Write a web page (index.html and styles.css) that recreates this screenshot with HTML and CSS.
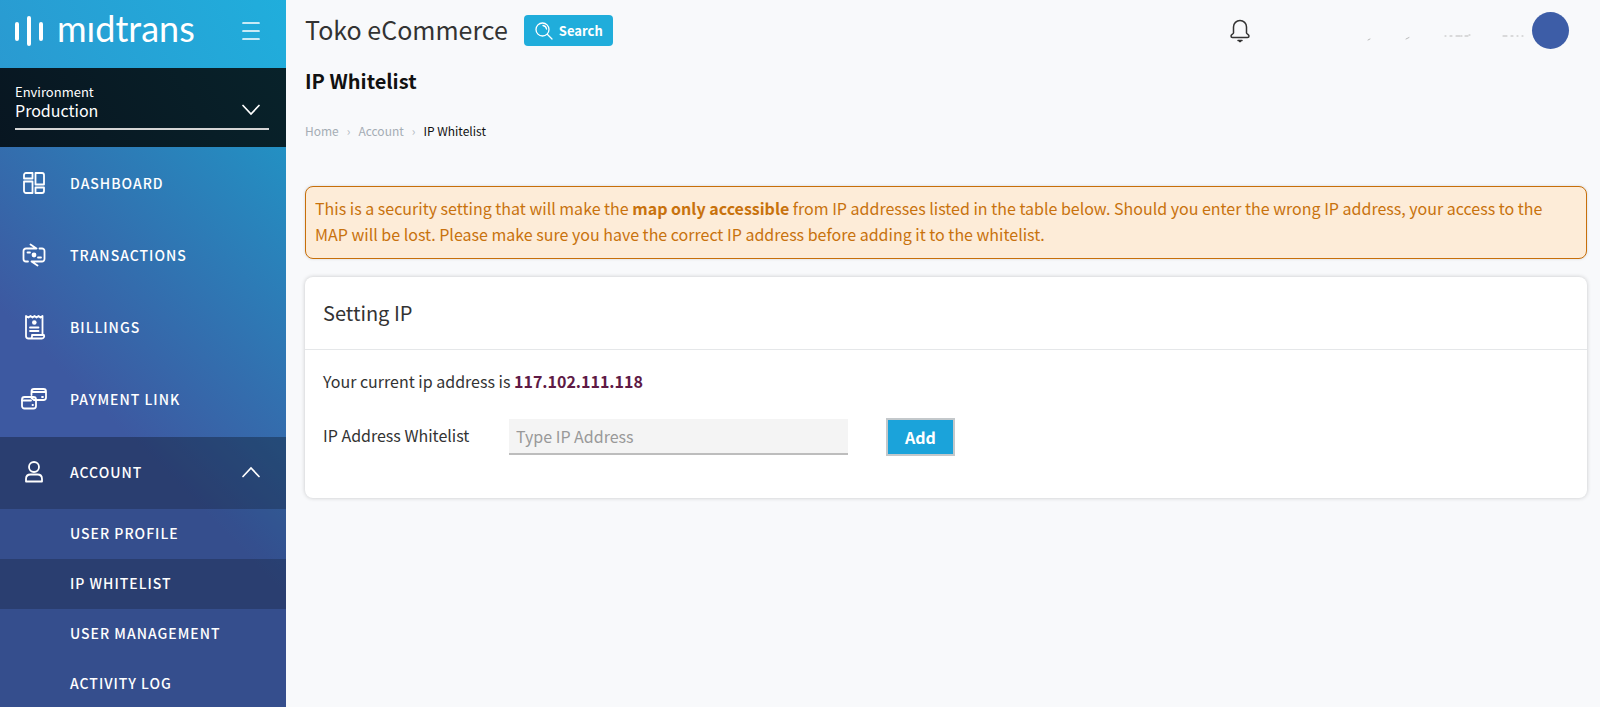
FILE: index.html
```html
<!DOCTYPE html>
<html lang="en">
<head>
<meta charset="utf-8">
<meta name="viewport" content="width=device-width, initial-scale=1">
<title>IP Whitelist</title>
<link rel="stylesheet" href="styles.css">
</head>
<body>
<div class="app">
  <aside class="sidebar">
    <div class="brand">
      <a class="brand-link" href="#" aria-label="midtrans">
        <svg class="brand-mark" width="28" height="30" viewBox="0 0 28 30" fill="none" stroke="#fff" stroke-width="4" stroke-linecap="round"><path d="M2 8v15M14 2v26M26 8v15"/></svg>
        <span class="brand-name">mıdtrans</span>
      </a>
      <button class="icon-button" type="button" aria-label="Toggle menu">
        <svg width="18" height="20" viewBox="0 0 18 20" fill="none" stroke="#fff" stroke-width="1.700" stroke-linecap="round"><path d="M1 2h16M1 10h16M1 18h16"/></svg>
      </button>
    </div>
    <div class="environment">
      <div class="environment-field">
        <label class="environment-label" for="environment">Environment</label>
        <select class="environment-select" id="environment"><option>Production</option><option>Sandbox</option></select>
        <svg class="environment-chevron" width="18" height="12" viewBox="0 0 18 12" fill="none" stroke="#fff" stroke-width="1.700" stroke-linecap="round"><path d="M1 1.500l8 8.500 8-8.500"/></svg>
      </div>
    </div>
    <nav>
      <ul class="menu">
        <li><a class="menu-item" href="#">
          <svg class="menu-icon" viewBox="0 0 26 26" fill="none" stroke="#fff" stroke-width="1.800" stroke-linejoin="round"><path d="M5 3h6.500v5.500H3V5a2 2 0 0 1 2-2zM14.500 3H21a2 2 0 0 1 2 2v9.500h-8.500zM3 11.500h8.500V23H5a2 2 0 0 1-2-2zM14.500 17.500H23V21a2 2 0 0 1-2 2h-6.500z"/></svg>Dashboard</a></li>
        <li><a class="menu-item" href="#">
          <svg class="menu-icon" viewBox="0 0 26 26" fill="none" stroke="#fff" stroke-width="1.800" stroke-linecap="round" stroke-linejoin="round"><path d="M9.500 2.500l6 4H5a2.500 2.500 0 0 0-2.500 2.500v8A2.500 2.500 0 0 0 5 19.500h2M18.500 6.500H21a2.500 2.500 0 0 1 2.500 2.500v8a2.500 2.500 0 0 1-2.500 2.500H10.500l6 4M6.500 10.500h2.500M17 15.500h3"/><circle cx="13" cy="13" r="2.400" fill="#fff" stroke="none"/></svg>Transactions</a></li>
        <li><a class="menu-item" href="#">
          <svg class="menu-icon" viewBox="0 0 26 26" fill="none" stroke="#fff" stroke-width="1.800" stroke-linecap="round" stroke-linejoin="round"><path d="M21.500 20V2l-2 1.500-2-1.500-2 1.500-2-1.500-2 1.500-2-1.500-2 1.500L5 2v20a2.500 2.500 0 0 0 2.500 2.500h13A2.500 2.500 0 0 0 23 21H11v1.500a2 2 0 0 1-2.500 2M9 13.500h8.500M9 17h8.500"/><circle cx="13.300" cy="8.500" r="2.300" fill="#fff" stroke="none"/></svg>Billings</a></li>
        <li><a class="menu-item" href="#">
          <svg class="menu-icon" viewBox="0 0 26 26" fill="none" stroke="#fff" stroke-width="1.800" stroke-linecap="round" stroke-linejoin="round"><path d="M10.500 9V5.500a2.500 2.500 0 0 1 2.500-2.500h9.500A2.500 2.500 0 0 1 25 5.500v6a2.500 2.500 0 0 1-2.500 2.500H13l-2.500-2M10.500 6H25M21 11h1"/><rect x="1" y="11" width="14" height="11.500" rx="2.500"/><path d="M1 14.500h9M11.500 19h.5"/></svg>Payment Link</a></li>
      </ul>
      <button class="menu-item menu-item-open" type="button" aria-expanded="true">
        <svg class="menu-icon" viewBox="0 0 26 26" fill="none" stroke="#fff" stroke-width="1.800" stroke-linejoin="round"><circle cx="13" cy="8" r="5"/><path d="M5 22.500V20c0-3 2-4.500 4.500-4.500h7c2.500 0 4.500 1.500 4.500 4.500v2.500z"/></svg>Account
        <svg class="menu-chevron" width="18" height="12" viewBox="0 0 18 12" fill="none" stroke="#fff" stroke-width="1.700" stroke-linecap="round"><path d="M1 10.500L9 2l8 8.500"/></svg>
      </button>
      <ul class="submenu">
        <li><a class="submenu-item" href="#">User Profile</a></li>
        <li><a class="submenu-item submenu-item-active" href="#" aria-current="page">IP Whitelist</a></li>
        <li><a class="submenu-item" href="#">User Management</a></li>
        <li><a class="submenu-item" href="#">Activity Log</a></li>
      </ul>
    </nav>
  </aside>

  <main class="main">
    <header class="topbar">
      <div class="store">Toko eCommerce</div>
      <button class="search" type="button">
        <svg width="18" height="18" viewBox="0 0 18 18" fill="none" stroke="#fff" stroke-width="1.300" stroke-linecap="round"><circle cx="7.500" cy="7.500" r="6.500"/><path d="M12.500 12.500l4.500 4.500M8 3.500a4 4 0 0 1 3.500 3.500"/></svg>
        Search
      </button>
      <button class="icon-button bell" type="button" aria-label="Notifications">
        <svg width="20" height="24" viewBox="0 0 20 24" fill="none" stroke="#333" stroke-width="1.500" stroke-linecap="round" stroke-linejoin="round"><path d="M3.500 14V8a6.500 6.500 0 0 1 13-0v6c0 1 2.500 1.500 2.500 3 0 1-.5 1.500-1.500 1.500h-15C1.500 18.500 1 18 1 17c0-1.500 2.500-2 2.500-3z"/><path d="M8 21.500h4M9.500 22.500h1"/></svg>
      </button>
      <svg class="account-marks" width="164" height="20" viewBox="0 0 164 20" fill="none" stroke="#aaa" stroke-linecap="round"><path d="M3 14l2-1M41 13l3-1.500" stroke-width=".8"/><path d="M80 10h1M85 10h2M91 10h4M96 10h1M100 10h3M104 9h1M138 10h4M146 10h2M152 10h1M157 10h1" stroke-width=".8"/></svg>
      <a class="avatar" href="#" aria-label="Profile"></a>
    </header>

    <h1 class="page-title">IP Whitelist</h1>
    <nav class="breadcrumb" aria-label="Breadcrumb">
      <a class="crumb" href="#">Home</a>
      <span class="crumb-separator">›</span>
      <a class="crumb" href="#">Account</a>
      <span class="crumb-separator">›</span>
      <span class="crumb-current">IP Whitelist</span>
    </nav>

    <p class="alert">This is a security setting that will make the <b>map only accessible</b> from IP addresses listed in the table below. Should you enter the wrong IP address, your access to the MAP will be lost. Please make sure you have the correct IP address before adding it to the whitelist.</p>

    <section class="card">
      <h2 class="card-title">Setting IP</h2>
      <form class="card-body">
        <p class="current">Your current ip address is <b class="current-ip">117.102.111.118</b></p>
        <div class="field">
          <label class="field-label" for="ip">IP Address Whitelist</label>
          <input class="field-input" id="ip" type="text" placeholder="Type IP Address">
          <button class="add" type="button">Add</button>
        </div>
      </form>
    </section>
  </main>
</div>
</body>
</html>
```
FILE: styles.css
```css
* { box-sizing: border-box; }
body {
  margin: 0;
  background: #f8f9fb;
  color: #333;
  font-family: "Noto Sans CJK SC", "Noto Sans", sans-serif;
  font-size: 16px;
  line-height: 26px;
}
h1, h2, p, ul { margin: 0; padding: 0; }
ul { list-style: none; }
a { color: inherit; text-decoration: none; }
button, input, select { font: inherit; color: inherit; }
button { cursor: pointer; }
.app { display: flex; height: 100vh; overflow: hidden; }

.sidebar {
  flex: 0 0 286px;
  overflow: hidden;
  color: #fff;
  background: linear-gradient(225deg, #1da4d0 0, #2390c3 106px, #3d59a1 420px);
}
.brand {
  display: flex;
  align-items: center;
  justify-content: space-between;
  height: 68px;
  padding: 0 26px 6px 15px;
  background: linear-gradient(60deg, #2a9ad1, #20aedc);
}
.brand-link { display: flex; align-items: center; gap: 14px; }
.brand-name { padding-bottom: 6px; font-family: Lato, sans-serif; font-size: 36px; font-weight: 400; line-height: 36px; }
.icon-button { display: flex; padding: 0; border: 0; background: none; }
.environment { padding: 16px 17px 17px 15px; background: linear-gradient(60deg, #081621, #08222a); }
.environment-field { position: relative; display: flex; flex-direction: column; height: 46px; border-bottom: 2px solid #d5d5d5; }
.environment-label { font-size: 13px; line-height: 16px; }
.environment-select {
  appearance: none;
  width: 100%;
  height: 20px;
  padding: 0;
  border: 0;
  background: none;
  font-size: 16px;
  line-height: 20px;
}
.environment-chevron { position: absolute; right: 9px; top: 20px; pointer-events: none; }
.menu { padding: 1px 0; }
.menu-item {
  display: flex;
  align-items: center;
  gap: 23px;
  width: 100%;
  height: 72px;
  padding: 0 26px 2px 21px;
  border: 0;
  background: none;
  font-size: 14px;
  letter-spacing: 1px;
  text-transform: uppercase;
}
.menu-item-open { background: rgba(0, 0, 0, .3); }
.menu-icon { width: 26px; height: 26px; }
.menu-chevron { margin-left: auto; }
.submenu { background: rgba(0, 0, 0, .12); }
.submenu-item {
  display: block;
  padding: 0 0 2px 70px;
  font-size: 14px;
  line-height: 48px;
  letter-spacing: 1px;
  text-transform: uppercase;
}
.menu-item, .submenu-item { font-weight: 500; }
.submenu-item-active { background: rgba(0, 0, 0, .2); }

.main { flex: 1; min-width: 0; padding: 0 13px 0 19px; }
.topbar { display: flex; align-items: center; height: 61px; padding-right: 18px; }
.store { padding-bottom: 3px; font-size: 25px; line-height: 36px; }
.search {
  display: flex;
  align-items: center;
  gap: 6px;
  height: 31px;
  margin-left: 16px;
  padding: 0 10px 0 11px;
  border: 0;
  border-radius: 4px;
  background: #20addb;
  color: #fff;
  font-size: 13px;
  font-weight: 700;
}
.bell { margin-left: auto; }
.account-marks { margin: 10px 0 0 115px; }
.avatar { width: 37px; height: 37px; margin-left: 3px; border-radius: 50%; background: #3d5da7; }
.page-title { color: #111; font-size: 20px; font-weight: 700; line-height: 40px; }
.breadcrumb { display: flex; gap: 8px; margin-top: 17px; font-size: 12px; }
.crumb { color: #a5adb5; }
.crumb-separator { color: #b5bbc2; }
.crumb-current { color: #111; }
.alert {
  margin-top: 42px;
  padding: 8px 9px 11px;
  border: 1px solid #c76f0a;
  border-radius: 8px;
  background: #fdecd8;
  box-shadow: 0 0 3px rgba(0, 0, 0, .15);
  color: #c8720d;
}
.card { margin-top: 18px; border-radius: 8px; background: #fff; box-shadow: 0 0 4px rgba(0, 0, 0, .2); }
.card-title { padding: 18px; border-bottom: 1px solid #e5e7e9; font-size: 20px; font-weight: 400; line-height: 36px; }
.card-body { padding: 18px 18px 42px; }
.current-ip { color: #5e1a45; }
.field { display: flex; align-items: center; margin-top: 24px; }
.field-label { flex: 0 0 186px; padding-bottom: 4px; }
.field-input {
  width: 339px;
  height: 36px;
  padding: 0 7px;
  border: 0;
  border-bottom: 2px solid #bdbdbd;
  background: #f4f4f4;
}
.field-input::placeholder { color: #999; }
.add { height: 38px; margin-left: 38px; padding: 0 17px; border: 2px solid #c3c8cb; background: #1ba3da; color: #fff; font-weight: 700; }
```
